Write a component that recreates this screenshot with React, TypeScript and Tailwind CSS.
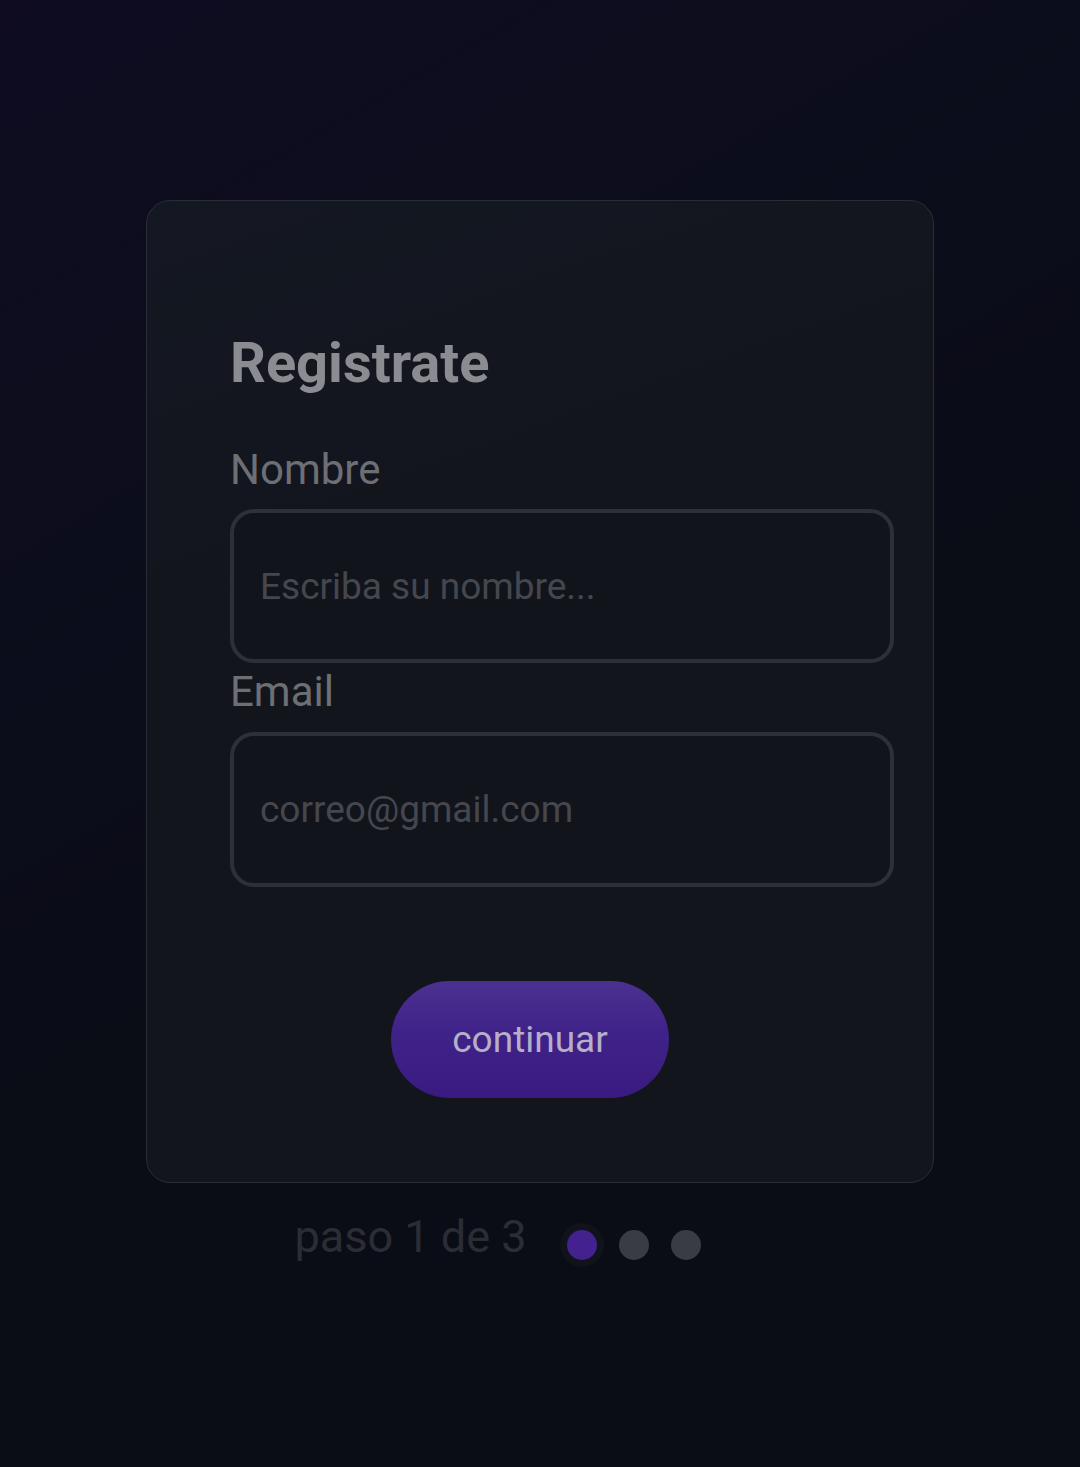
import { useState } from 'react'

export default function App() {
  const [form, setForm] = useState({ nombre: "", email: "" })
  const step = 1

  return (
    <div
      className="min-h-screen w-full flex flex-col items-center bg-[#0a0d16] bg-[linear-gradient(150deg,#0f0c21_0%,#0c0d1c_30%,#0a0c16_55%,#0a0d16_100%)] pt-[200px]"
      style={{ fontFamily: 'Roboto, "Liberation Sans", sans-serif' }}
    >
      <div className="w-[788px] h-[983px] rounded-[24px] border-[1.5px] border-[#2a2c36] bg-[#13151d] bg-[linear-gradient(160deg,#141822_0%,#13151d_35%,#13151d_100%)] pl-[83px] pr-[39px] pt-[130px] flex flex-col">
        <h1 className="text-[56px] leading-[64px] font-bold text-[#8b8c91]">Registrate</h1>

        <label htmlFor="nombre" className="mt-[51px] text-[42px] leading-[48px] text-[#6d6f75]">Nombre</label>
        <input
          id="nombre"
          type="text"
          placeholder="Escriba su nombre..."
          value={form.nombre}
          onChange={(e) => setForm({ ...form, nombre: e.target.value })}
          className="mt-[15px] h-[154px] w-full rounded-[24px] border-[4px] border-[#2d3039] bg-[#12141c] px-[26px] text-[37px] text-[#8b8c91] placeholder:text-[#45474e] outline-none"
        />

        <label htmlFor="email" className="mt-[5px] text-[42px] leading-[48px] text-[#6d6f75]">Email</label>
        <input
          id="email"
          type="email"
          placeholder="correo@gmail.com"
          value={form.email}
          onChange={(e) => setForm({ ...form, email: e.target.value })}
          className="mt-[16px] h-[155px] w-full rounded-[24px] border-[4px] border-[#2d3039] bg-[#12141c] px-[26px] text-[37px] text-[#8b8c91] placeholder:text-[#45474e] outline-none"
        />

        <div className="flex justify-center pr-[64px] mt-[94px]">
          <button className="w-[278px] h-[117px] rounded-full bg-[linear-gradient(180deg,#4a3190_0%,#3f2288_45%,#3a1a80_100%)] text-[37px] text-[#b6afc8]">
            continuar
          </button>
        </div>
      </div>

      <div className="flex items-center mt-[28px] mr-[84px]">
        <span className="text-[45px] leading-[52px] text-[#2b2d35]">paso {step} de 3</span>
        <div className="flex items-center ml-[41px] mt-[16px] gap-[22px]">
          <div className="w-[30px] h-[30px] rounded-full bg-[#43228f] shadow-[0_0_0_7px_#11131b]" />
          <div className="w-[30px] h-[30px] rounded-full bg-[#3a3c44]" />
          <div className="w-[30px] h-[30px] rounded-full bg-[#3a3c44]" />
        </div>
      </div>
    </div>
  )
}
